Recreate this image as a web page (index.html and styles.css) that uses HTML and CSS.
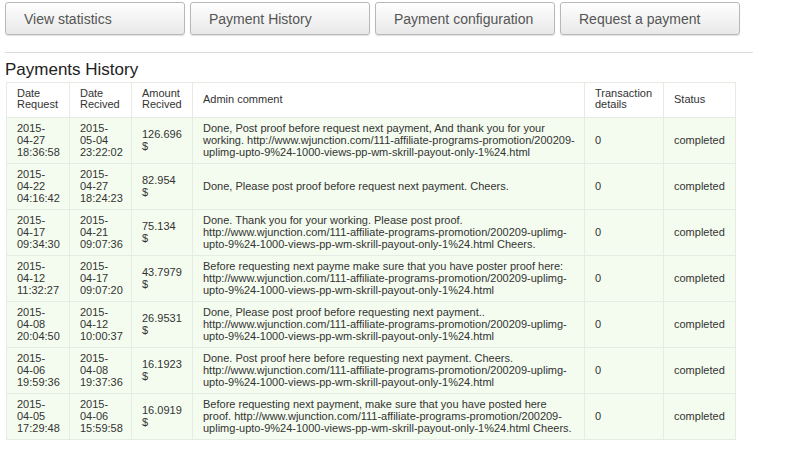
FILE: index.html
```html
<!DOCTYPE html>
<html lang="en">
<head>
    <meta charset="UTF-8">
    <meta name="viewport" content="width=device-width, initial-scale=1.0">
    <title>Payments History</title>
    <link rel="stylesheet" href="styles.css">
</head>
<body>

    <div class="tabs">
        <button type="button" class="tab">View statistics</button>
        <button type="button" class="tab">Payment History</button>
        <button type="button" class="tab">Payment configuration</button>
        <button type="button" class="tab">Request a payment</button>
    </div>

    <hr class="divider">

    <h2>Payments History</h2>

    <table class="history">
        <colgroup>
            <col style="width: 63px">
            <col style="width: 62px">
            <col style="width: 61px">
            <col style="width: 392px">
            <col style="width: 79px">
            <col style="width: 72px">
        </colgroup>
        <thead>
            <tr>
                <th>Date Request</th>
                <th>Date Recived</th>
                <th>Amount Recived</th>
                <th>Admin comment</th>
                <th>Transaction details</th>
                <th>Status</th>
            </tr>
        </thead>
        <tbody>
            <tr>
                <td>2015-<br>04-27<br>18:36:58</td>
                <td>2015-<br>05-04<br>23:22:02</td>
                <td>126.696<br>$</td>
                <td class="comment">Done, Post proof before request next payment, And thank you for your<br>working. http://www.wjunction.com/111-affiliate-programs-promotion/200209-<br>uplimg-upto-9%24-1000-views-pp-wm-skrill-payout-only-1%24.html</td>
                <td>0</td>
                <td>completed</td>
            </tr>
            <tr>
                <td>2015-<br>04-22<br>04:16:42</td>
                <td>2015-<br>04-27<br>18:24:23</td>
                <td>82.954<br>$</td>
                <td class="comment">Done, Please post proof before request next payment. Cheers.</td>
                <td>0</td>
                <td>completed</td>
            </tr>
            <tr>
                <td>2015-<br>04-17<br>09:34:30</td>
                <td>2015-<br>04-21<br>09:07:36</td>
                <td>75.134<br>$</td>
                <td class="comment">Done. Thank you for your working. Please post proof.<br>http://www.wjunction.com/111-affiliate-programs-promotion/200209-uplimg-<br>upto-9%24-1000-views-pp-wm-skrill-payout-only-1%24.html Cheers.</td>
                <td>0</td>
                <td>completed</td>
            </tr>
            <tr>
                <td>2015-<br>04-12<br>11:32:27</td>
                <td>2015-<br>04-17<br>09:07:20</td>
                <td>43.7979<br>$</td>
                <td class="comment">Before requesting next payme make sure that you have poster proof here:<br>http://www.wjunction.com/111-affiliate-programs-promotion/200209-uplimg-<br>upto-9%24-1000-views-pp-wm-skrill-payout-only-1%24.html</td>
                <td>0</td>
                <td>completed</td>
            </tr>
            <tr>
                <td>2015-<br>04-08<br>20:04:50</td>
                <td>2015-<br>04-12<br>10:00:37</td>
                <td>26.9531<br>$</td>
                <td class="comment">Done, Please post proof before requesting next payment..<br>http://www.wjunction.com/111-affiliate-programs-promotion/200209-uplimg-<br>upto-9%24-1000-views-pp-wm-skrill-payout-only-1%24.html</td>
                <td>0</td>
                <td>completed</td>
            </tr>
            <tr>
                <td>2015-<br>04-06<br>19:59:36</td>
                <td>2015-<br>04-08<br>19:37:36</td>
                <td>16.1923<br>$</td>
                <td class="comment">Done. Post proof here before requesting next payment. Cheers.<br>http://www.wjunction.com/111-affiliate-programs-promotion/200209-uplimg-<br>upto-9%24-1000-views-pp-wm-skrill-payout-only-1%24.html</td>
                <td>0</td>
                <td>completed</td>
            </tr>
            <tr>
                <td>2015-<br>04-05<br>17:29:48</td>
                <td>2015-<br>04-06<br>15:59:58</td>
                <td>16.0919<br>$</td>
                <td class="comment">Before requesting next payment, make sure that you have posted here<br>proof. http://www.wjunction.com/111-affiliate-programs-promotion/200209-<br>uplimg-upto-9%24-1000-views-pp-wm-skrill-payout-only-1%24.html Cheers.</td>
                <td>0</td>
                <td>completed</td>
            </tr>
        </tbody>
    </table>

</body>
</html>
```

FILE: styles.css
```css
/* Page basics */
body {
    font-family: "Liberation Sans", Arial, sans-serif;
    color: #333;
    margin: 2px 5px;
}

/* Top tab buttons */
.tabs {
    display: flex;
    gap: 5px;
}

.tab {
    width: 180px;
    height: 33px;
    padding: 0 0 0 18px;
    text-align: left;
    font-family: inherit;
    font-size: 14px;
    color: #555;
    background: linear-gradient(#ffffff, #e8e8e8);
    border: 1px solid #b8b8b8;
    border-radius: 3px;
    box-shadow: 0 1px 1px rgba(0, 0, 0, 0.12);
    cursor: pointer;
}

.tab:hover {
    background: linear-gradient(#f4f4f4, #dcdcdc);
}

.divider {
    width: 748px;
    margin: 17px 0 0 0;
    border: none;
    border-top: 1px solid #dcdcdc;
}

h2 {
    font-size: 17px;
    font-weight: normal;
    color: #222;
    margin: 7px 0 2px 0;
}

/* Payments table */
.history {
    table-layout: fixed;
    width: 729px;
    margin-left: 1px;
    border-collapse: collapse;
    font-size: 11px;
    line-height: 12px;
}

.history th,
.history td {
    border: 1px solid #e6ebe4;
    padding: 4px 10px 5px 10px;
    text-align: left;
    vertical-align: middle;
}

.history th {
    font-weight: normal;
    background-color: #fff;
    line-height: 11px;
    padding: 5px 10px 7px 10px;
}

.history td {
    background-color: #f3fcef;
}

.history .comment {
    white-space: nowrap;
}
```
